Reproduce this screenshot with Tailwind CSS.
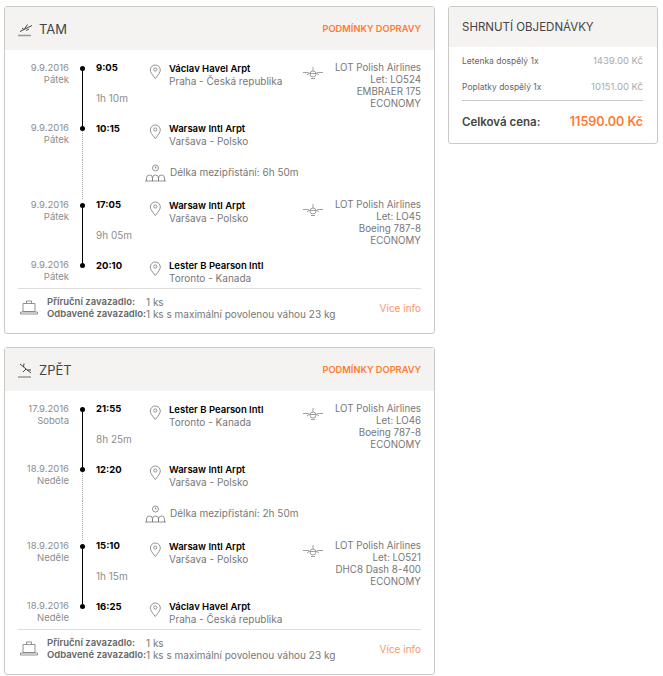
<!DOCTYPE html>
<html lang="cs">
<head>
<meta charset="utf-8">
<script src="https://cdn.jsdelivr.net/npm/@tailwindcss/browser@4"></script>
<title>Objednávka</title>
</head>
<body class="bg-white font-['Inter','Liberation_Sans',sans-serif] text-[10px] leading-[12px] text-[#777]">
<div class="flex items-start gap-[13px] pt-[6px] pl-[4px] w-[663px]">
  <div class="flex flex-col gap-[13px] w-[431px]">

    <section class="h-[328px] border border-[#c9c9c5] rounded-[3px] flex flex-col">
      <header class="h-[43px] bg-[#f4f3f1] flex items-center px-[13px]">
        <svg class="w-[16px] h-[16px] mr-[5px]" viewBox="0 0 16 16" fill="none" stroke="#444" stroke-width="1"><path d="M0 14.5h13" stroke="#999" stroke-width="1.5"/><path d="M2 10.5 14 4.5M6.5 8 9.5 3.5M6 8.5 4 7M8 9.5l3-1.5" /></svg>
        <h2 class="text-[13px] text-[#444] font-normal flex-1">TAM</h2>
        <a class="text-[9.25px] font-semibold text-[#ff7b33]">PODMÍNKY DOPRAVY</a>
      </header>
      <div class="flex-1 flex flex-col pt-[12px] px-[13px]">
        <div class="flex h-[60px]">
          <div class="w-[51px] text-right text-[9.5px] text-[#8d8d8d]"><p>9.9.2016</p><p>Pátek</p></div>
          <div class="w-[26px] relative flex justify-center"><span class="absolute top-[4px] w-[5px] h-[5px] rounded-full bg-black"></span><span class="mt-[6px] h-[60px] border-l-[1.5px] border-black"></span></div>
          <div class="w-[50px] pl-[1px] flex flex-col"><b class="text-[9.5px] font-bold text-black">9:05</b><span class="mt-[18px] text-[#8d8d8d]">1h 10m</span></div>
          <svg class="w-[24px] h-[15px] mt-[2px]" viewBox="0 0 24 15" fill="none" stroke="#777" stroke-width=".8"><path d="M10.3 14.5C7 10.5 5.3 8 5.3 6a5 5 0 0 1 10 0c0 2-1.7 4.5-5 8.5Z"/><circle cx="10.3" cy="5.5" r="1.6"/></svg>
          <div class="w-[134px]"><b class="text-[9.5px] font-semibold text-black">Václav Havel Arpt</b><p>Praha - Česká republika</p></div>
          <svg class="w-[20px] h-[12px] mt-[5px]" viewBox="0 0 20 12" fill="none" stroke="#888" stroke-width=".8"><path d="M0 5.5h5l2 1h6l2-1h5M7 7a3 3 0 1 0 6 0 3 3 0 1 0-6 0M10 4V0M4 8l2-1.500M14 6.500l2 1.500M8 11.500h4"/></svg>
          <div class="flex-1 text-right text-[9.75px]"><p>LOT Polish Airlines</p><p>Let: LO524</p><p>EMBRAER 175</p><p>ECONOMY</p></div>
        </div>
        <div class="flex h-[38px]">
          <div class="w-[51px] text-right text-[9.5px] text-[#8d8d8d]"><p>9.9.2016</p><p>Pátek</p></div>
          <div class="w-[26px] relative flex justify-center"><span class="absolute top-[4px] w-[5px] h-[5px] rounded-full bg-black"></span><span class="mt-[6px] border-l border-dotted border-[#aaa]"></span></div>
          <div class="w-[50px] pl-[1px]"><b class="text-[9.5px] font-bold text-black">10:15</b></div>
          <svg class="w-[24px] h-[15px] mt-[2px]" viewBox="0 0 24 15" fill="none" stroke="#777" stroke-width=".8"><path d="M10.3 14.5C7 10.5 5.3 8 5.3 6a5 5 0 0 1 10 0c0 2-1.7 4.5-5 8.5Z"/><circle cx="10.3" cy="5.5" r="1.6"/></svg>
          <div><b class="text-[9.5px] font-semibold text-black">Warsaw Intl Arpt</b><p>Varšava - Polsko</p></div>
        </div>
        <div class="flex h-[39px]">
          <div class="w-[51px]"></div>
          <div class="w-[26px] flex justify-center"><span class="border-l border-dotted border-[#aaa]"></span></div>
          <div class="w-[50px]"></div>
          <svg class="w-[24px] h-[20px] mt-[3px] mr-[1px]" viewBox="0 0 24 20" fill="none" stroke="#777" stroke-width=".8"><circle cx="10.500" cy="5" r="3"/><path d="M10.500 3.500V5h1.200M1.500 18v-3a3 3 0 0 1 6 0v3M7.500 18v-3a3 3 0 0 1 6 0v3M13.500 18v-3a3 3 0 0 1 6 0v3M0 18h21"/></svg>
          <p class="mt-[6px]">Délka mezipřistání: 6h 50m</p>
        </div>
        <div class="flex h-[60px]">
          <div class="w-[51px] text-right text-[9.5px] text-[#8d8d8d]"><p>9.9.2016</p><p>Pátek</p></div>
          <div class="w-[26px] relative flex justify-center"><span class="absolute top-[4px] w-[5px] h-[5px] rounded-full bg-black"></span><span class="mt-[6px] h-[60px] border-l-[1.5px] border-black"></span></div>
          <div class="w-[50px] pl-[1px] flex flex-col"><b class="text-[9.5px] font-bold text-black">17:05</b><span class="mt-[18px] text-[#8d8d8d]">9h 05m</span></div>
          <svg class="w-[24px] h-[15px] mt-[2px]" viewBox="0 0 24 15" fill="none" stroke="#777" stroke-width=".8"><path d="M10.3 14.5C7 10.5 5.3 8 5.3 6a5 5 0 0 1 10 0c0 2-1.7 4.5-5 8.5Z"/><circle cx="10.3" cy="5.5" r="1.6"/></svg>
          <div class="w-[134px]"><b class="text-[9.5px] font-semibold text-black">Warsaw Intl Arpt</b><p>Varšava - Polsko</p></div>
          <svg class="w-[20px] h-[12px] mt-[5px]" viewBox="0 0 20 12" fill="none" stroke="#888" stroke-width=".8"><path d="M0 5.5h5l2 1h6l2-1h5M7 7a3 3 0 1 0 6 0 3 3 0 1 0-6 0M10 4V0M4 8l2-1.500M14 6.500l2 1.500M8 11.500h4"/></svg>
          <div class="flex-1 text-right text-[9.75px]"><p>LOT Polish Airlines</p><p>Let: LO45</p><p>Boeing 787-8</p><p>ECONOMY</p></div>
        </div>
        <div class="flex h-[30px] border-b border-[#ddd]">
          <div class="w-[51px] text-right text-[9.5px] text-[#8d8d8d]"><p>9.9.2016</p><p>Pátek</p></div>
          <div class="w-[26px] relative flex justify-center"><span class="absolute top-[4px] w-[5px] h-[5px] rounded-full bg-black"></span></div>
          <div class="w-[50px] pl-[1px]"><b class="text-[9.5px] font-bold text-black">20:10</b></div>
          <svg class="w-[24px] h-[15px] mt-[2px]" viewBox="0 0 24 15" fill="none" stroke="#777" stroke-width=".8"><path d="M10.3 14.5C7 10.5 5.3 8 5.3 6a5 5 0 0 1 10 0c0 2-1.7 4.5-5 8.5Z"/><circle cx="10.3" cy="5.5" r="1.6"/></svg>
          <div><b class="text-[9.5px] font-semibold text-black">Lester B Pearson Intl</b><p>Toronto - Kanada</p></div>
        </div>
        <div class="flex items-center h-[38px]">
          <svg class="w-[18px] h-[16px] ml-[2px] mr-[9px]" viewBox="0 0 18 16" fill="none" stroke="#777" stroke-width=".8"><path d="M3 3.500h12v8H3ZM6.500 3.500V1h5v2.500M.5 12h17v2H.5Z"/></svg>
          <div class="flex-1"><p class="flex whitespace-nowrap"><b class="w-[99px] text-[9.5px] font-semibold text-[#666]">Příruční zavazadlo:</b><span>1 ks</span></p><p class="flex whitespace-nowrap"><b class="w-[99px] text-[9.5px] font-semibold text-[#666]">Odbavené zavazadlo:</b><span>1 ks s maximální povolenou váhou 23 kg</span></p></div>
          <a class="text-[#ff9468]">Více info</a>
        </div>
      </div>
    </section>

    <section class="h-[328px] border border-[#c9c9c5] rounded-[3px] flex flex-col">
      <header class="h-[43px] bg-[#f4f3f1] flex items-center px-[13px]">
        <svg class="w-[16px] h-[16px] mr-[5px]" viewBox="0 0 16 16" fill="none" stroke="#444" stroke-width="1"><path d="M0 15h13" stroke="#999" stroke-width="1.500"/><path d="M2 2 13 11M5.500 5 6 1.500M5 10 8 7M9 8l4 0" /></svg>
        <h2 class="text-[13px] text-[#444] font-normal flex-1">ZPĚT</h2>
        <a class="text-[9.25px] font-semibold text-[#ff7b33]">PODMÍNKY DOPRAVY</a>
      </header>
      <div class="flex-1 flex flex-col pt-[12px] px-[13px]">
        <div class="flex h-[60px]">
          <div class="w-[51px] text-right text-[9.5px] text-[#8d8d8d]"><p>17.9.2016</p><p>Sobota</p></div>
          <div class="w-[26px] relative flex justify-center"><span class="absolute top-[4px] w-[5px] h-[5px] rounded-full bg-black"></span><span class="mt-[6px] h-[60px] border-l-[1.5px] border-black"></span></div>
          <div class="w-[50px] pl-[1px] flex flex-col"><b class="text-[9.5px] font-bold text-black">21:55</b><span class="mt-[18px] text-[#8d8d8d]">8h 25m</span></div>
          <svg class="w-[24px] h-[15px] mt-[2px]" viewBox="0 0 24 15" fill="none" stroke="#777" stroke-width=".8"><path d="M10.3 14.5C7 10.5 5.3 8 5.3 6a5 5 0 0 1 10 0c0 2-1.7 4.5-5 8.5Z"/><circle cx="10.3" cy="5.5" r="1.6"/></svg>
          <div class="w-[134px]"><b class="text-[9.5px] font-semibold text-black">Lester B Pearson Intl</b><p>Toronto - Kanada</p></div>
          <svg class="w-[20px] h-[12px] mt-[5px]" viewBox="0 0 20 12" fill="none" stroke="#888" stroke-width=".8"><path d="M0 5.5h5l2 1h6l2-1h5M7 7a3 3 0 1 0 6 0 3 3 0 1 0-6 0M10 4V0M4 8l2-1.500M14 6.500l2 1.500M8 11.500h4"/></svg>
          <div class="flex-1 text-right text-[9.75px]"><p>LOT Polish Airlines</p><p>Let: LO46</p><p>Boeing 787-8</p><p>ECONOMY</p></div>
        </div>
        <div class="flex h-[38px]">
          <div class="w-[51px] text-right text-[9.5px] text-[#8d8d8d]"><p>18.9.2016</p><p>Neděle</p></div>
          <div class="w-[26px] relative flex justify-center"><span class="absolute top-[4px] w-[5px] h-[5px] rounded-full bg-black"></span><span class="mt-[6px] border-l border-dotted border-[#aaa]"></span></div>
          <div class="w-[50px] pl-[1px]"><b class="text-[9.5px] font-bold text-black">12:20</b></div>
          <svg class="w-[24px] h-[15px] mt-[2px]" viewBox="0 0 24 15" fill="none" stroke="#777" stroke-width=".8"><path d="M10.3 14.5C7 10.5 5.3 8 5.3 6a5 5 0 0 1 10 0c0 2-1.7 4.5-5 8.5Z"/><circle cx="10.3" cy="5.5" r="1.6"/></svg>
          <div><b class="text-[9.5px] font-semibold text-black">Warsaw Intl Arpt</b><p>Varšava - Polsko</p></div>
        </div>
        <div class="flex h-[39px]">
          <div class="w-[51px]"></div>
          <div class="w-[26px] flex justify-center"><span class="border-l border-dotted border-[#aaa]"></span></div>
          <div class="w-[50px]"></div>
          <svg class="w-[24px] h-[20px] mt-[3px] mr-[1px]" viewBox="0 0 24 20" fill="none" stroke="#777" stroke-width=".8"><circle cx="10.500" cy="5" r="3"/><path d="M10.500 3.500V5h1.200M1.500 18v-3a3 3 0 0 1 6 0v3M7.500 18v-3a3 3 0 0 1 6 0v3M13.500 18v-3a3 3 0 0 1 6 0v3M0 18h21"/></svg>
          <p class="mt-[6px]">Délka mezipřistání: 2h 50m</p>
        </div>
        <div class="flex h-[60px]">
          <div class="w-[51px] text-right text-[9.5px] text-[#8d8d8d]"><p>18.9.2016</p><p>Neděle</p></div>
          <div class="w-[26px] relative flex justify-center"><span class="absolute top-[4px] w-[5px] h-[5px] rounded-full bg-black"></span><span class="mt-[6px] h-[60px] border-l-[1.5px] border-black"></span></div>
          <div class="w-[50px] pl-[1px] flex flex-col"><b class="text-[9.5px] font-bold text-black">15:10</b><span class="mt-[18px] text-[#8d8d8d]">1h 15m</span></div>
          <svg class="w-[24px] h-[15px] mt-[2px]" viewBox="0 0 24 15" fill="none" stroke="#777" stroke-width=".8"><path d="M10.3 14.5C7 10.5 5.3 8 5.3 6a5 5 0 0 1 10 0c0 2-1.7 4.5-5 8.5Z"/><circle cx="10.3" cy="5.5" r="1.6"/></svg>
          <div class="w-[134px]"><b class="text-[9.5px] font-semibold text-black">Warsaw Intl Arpt</b><p>Varšava - Polsko</p></div>
          <svg class="w-[20px] h-[12px] mt-[5px]" viewBox="0 0 20 12" fill="none" stroke="#888" stroke-width=".8"><path d="M0 5.5h5l2 1h6l2-1h5M7 7a3 3 0 1 0 6 0 3 3 0 1 0-6 0M10 4V0M4 8l2-1.500M14 6.500l2 1.500M8 11.500h4"/></svg>
          <div class="flex-1 text-right text-[9.75px]"><p>LOT Polish Airlines</p><p>Let: LO521</p><p>DHC8 Dash 8-400</p><p>ECONOMY</p></div>
        </div>
        <div class="flex h-[30px] border-b border-[#ddd]">
          <div class="w-[51px] text-right text-[9.5px] text-[#8d8d8d]"><p>18.9.2016</p><p>Neděle</p></div>
          <div class="w-[26px] relative flex justify-center"><span class="absolute top-[4px] w-[5px] h-[5px] rounded-full bg-black"></span></div>
          <div class="w-[50px] pl-[1px]"><b class="text-[9.5px] font-bold text-black">16:25</b></div>
          <svg class="w-[24px] h-[15px] mt-[2px]" viewBox="0 0 24 15" fill="none" stroke="#777" stroke-width=".8"><path d="M10.3 14.5C7 10.5 5.3 8 5.3 6a5 5 0 0 1 10 0c0 2-1.7 4.5-5 8.5Z"/><circle cx="10.3" cy="5.5" r="1.6"/></svg>
          <div><b class="text-[9.5px] font-semibold text-black">Václav Havel Arpt</b><p>Praha - Česká republika</p></div>
        </div>
        <div class="flex items-center h-[38px]">
          <svg class="w-[18px] h-[16px] ml-[2px] mr-[9px]" viewBox="0 0 18 16" fill="none" stroke="#777" stroke-width=".8"><path d="M3 3.500h12v8H3ZM6.500 3.500V1h5v2.500M.5 12h17v2H.5Z"/></svg>
          <div class="flex-1"><p class="flex whitespace-nowrap"><b class="w-[99px] text-[9.5px] font-semibold text-[#666]">Příruční zavazadlo:</b><span>1 ks</span></p><p class="flex whitespace-nowrap"><b class="w-[99px] text-[9.5px] font-semibold text-[#666]">Odbavené zavazadlo:</b><span>1 ks s maximální povolenou váhou 23 kg</span></p></div>
          <a class="text-[#ff9468]">Více info</a>
        </div>
      </div>
    </section>
  </div>

  <aside class="w-[210px] h-[138px] border border-[#c9c9c5] rounded-[3px] flex flex-col">
    <header class="h-[40px] bg-[#f4f3f1] flex items-center pl-[13px]"><h2 class="text-[11.5px] text-[#444] font-normal">SHRNUTÍ OBJEDNÁVKY</h2></header>
    <div class="flex-1 flex flex-col pl-[13px] pr-[14px]">
      <div class="flex justify-between items-center h-[27px] text-[8.5px]"><span class="text-[#666]">Letenka dospělý 1x</span><span class="text-[9.5px] text-[#aaa]">1439.00 Kč</span></div>
      <div class="flex justify-between items-center h-[27px] text-[8.5px] border-b border-[#c9c9c5]"><span class="text-[#666]">Poplatky dospělý 1x</span><span class="text-[9.5px] text-[#aaa]">10151.00 Kč</span></div>
      <div class="flex justify-between items-center flex-1"><b class="text-[11.5px] font-semibold text-[#444]">Celková cena:</b><b class="text-[12.5px] font-semibold text-[#ff7b33]">11590.00 Kč</b></div>
    </div>
  </aside>
</div>
</body>
</html>
